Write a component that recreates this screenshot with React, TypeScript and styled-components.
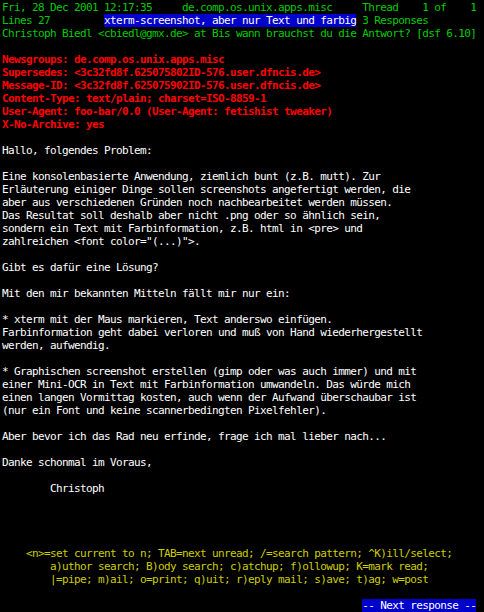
import styled, { createGlobalStyle } from "styled-components";

type Tone = "green" | "red" | "white" | "yellow";

const tones: Record<Tone, string> = {
  green: "#00cd00",
  red: "#ff0000",
  white: "#ffffff",
  yellow: "#cdcd00",
};

const GlobalStyle = createGlobalStyle`
  html, body {
    margin: 0;
    padding: 0;
    background: #000;
  }
`;

const Screen = styled.div`
  width: 484px;
  height: 612px;
  box-sizing: border-box;
  padding: 1px 2px 0;
  background: #000;
  display: flex;
  flex-direction: column;
  overflow: hidden;
  font-family: "DejaVu Sans Mono", "Liberation Mono", monospace;
  font-size: 11px;
  letter-spacing: -0.62px;
`;

const Block = styled.div`
  display: flex;
  flex-direction: column;
`;

const Footer = styled(Block)`
  margin-top: auto;
`;

const Row = styled.div<{ $tone: Tone; $bold?: boolean }>`
  height: 13px;
  line-height: 13px;
  white-space: pre;
  color: ${(p) => tones[p.$tone]};
  font-weight: ${(p) => (p.$bold ? 700 : 400)};
`;

const Mark = styled.span`
  background: #0000cd;
  color: #ffffff;
`;

const headers = [
  "Newsgroups: de.comp.os.unix.apps.misc",
  "Supersedes: <3c32fd8f.625075802ID-576.user.dfncis.de>",
  "Message-ID: <3c32fd8f.625075902ID-576.user.dfncis.de>",
  "Content-Type: text/plain; charset=ISO-8859-1",
  "User-Agent: foo-bar/0.0 (User-Agent: fetishist tweaker)",
  "X-No-Archive: yes",
];

const body = [
  "Hallo, folgendes Problem:",
  "",
  "Eine konsolenbasierte Anwendung, ziemlich bunt (z.B. mutt). Zur",
  "Erläuterung einiger Dinge sollen screenshots angefertigt werden, die",
  "aber aus verschiedenen Gründen noch nachbearbeitet werden müssen.",
  "Das Resultat soll deshalb aber nicht .png oder so ähnlich sein,",
  "sondern ein Text mit Farbinformation, z.B. html in <pre> und",
  'zahlreichen <font color="(...)">.',
  "",
  "Gibt es dafür eine Lösung?",
  "",
  "Mit den mir bekannten Mitteln fällt mir nur ein:",
  "",
  "* xterm mit der Maus markieren, Text anderswo einfügen.",
  "Farbinformation geht dabei verloren und muß von Hand wiederhergestellt",
  "werden, aufwendig.",
  "",
  "* Graphischen screenshot erstellen (gimp oder was auch immer) und mit",
  "einer Mini-OCR in Text mit Farbinformation umwandeln. Das würde mich",
  "einen langen Vormittag kosten, auch wenn der Aufwand überschaubar ist",
  "(nur ein Font und keine scannerbedingten Pixelfehler).",
  "",
  "Aber bevor ich das Rad neu erfinde, frage ich mal lieber nach...",
  "",
  "Danke schonmal im Voraus,",
  "",
  "        Christoph",
];

const help = [
  "    <n>=set current to n; TAB=next unread; /=search pattern; ^K)ill/select;",
  "        a)uthor search; B)ody search; c)atchup; f)ollowup; K=mark read;",
  "        |=pipe; m)ail; o=print; q)uit; r)eply mail; s)ave; t)ag; w=post",
];

function App() {
  return (
    <>
      <GlobalStyle />
      <Screen>
        <Block>
          <Row $tone="green">
            {"Fri, 28 Dec 2001 12:17:35     de.comp.os.unix.apps.misc     Thread    1 of    1"}
          </Row>
          <Row $tone="green">
            {"Lines 27         "}
            <Mark>xterm-screenshot, aber nur Text und farbig</Mark>
            {" 3 Responses"}
          </Row>
          <Row $tone="green">
            {"Christoph Biedl <cbiedl@gmx.de> at Bis wann brauchst du die Antwort? [dsf 6.10]"}
          </Row>
          <Row $tone="green" />
        </Block>
        <Block>
          {headers.map((line) => (
            <Row key={line} $tone="red" $bold>
              {line}
            </Row>
          ))}
          <Row $tone="red" />
        </Block>
        <Block>
          {body.map((line, i) => (
            <Row key={i} $tone="white">
              {line}
            </Row>
          ))}
        </Block>
        <Footer>
          {help.map((line) => (
            <Row key={line} $tone="yellow">
              {line}
            </Row>
          ))}
          <Row $tone="yellow" />
          <Row $tone="white">
            {" ".repeat(60)}
            <Mark>-- Next response --</Mark>
          </Row>
        </Footer>
      </Screen>
    </>
  );
}

export default App;
